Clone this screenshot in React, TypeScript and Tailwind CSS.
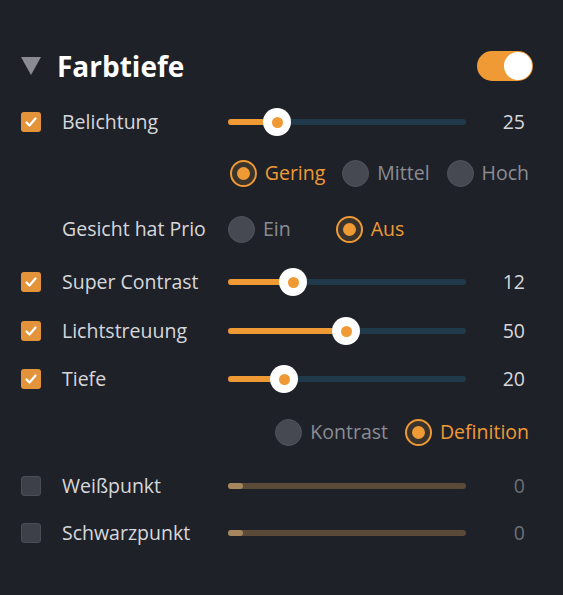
import React from 'react';

function Check({ on }: { on: boolean }) {
  return on ? (
    <div className="w-5 h-5 rounded-[3px] bg-[#e3943a] flex items-center justify-center shrink-0">
      <svg width="14" height="14" viewBox="0 0 14 14" fill="none">
        <path d="M2.5 7.5l3 3 6-7" stroke="#fff" strokeWidth="2.2" strokeLinecap="round" strokeLinejoin="round" />
      </svg>
    </div>
  ) : (
    <div className="w-5 h-5 rounded-[3px] bg-[#3d4049] border border-[#4a4d56] shrink-0" />
  );
}

function Radio({ on, label }: { on: boolean; label: string }) {
  return (
    <div className="flex items-center gap-2">
      {on ? (
        <div className="w-[27px] h-[27px] rounded-full border-2 border-[#ef9a34] bg-[#3a342d] flex items-center justify-center">
          <div className="w-[13px] h-[13px] rounded-full bg-[#ef9a34]" />
        </div>
      ) : (
        <div className="w-[27px] h-[27px] rounded-full bg-[#464952] border border-[#52555e]" />
      )}
      <span className={on ? 'text-[#ef9a34]' : 'text-[#8a8d94]'}>{label}</span>
    </div>
  );
}

function Slider({ pos }: { pos: number }) {
  // pos = knob center in px from track start
  return (
    <div className="relative w-[238px] h-7 flex items-center shrink-0">
      <div className="w-full h-[6px] rounded-full bg-[#203a4b]" />
      <div className="absolute left-0 h-[6px] rounded-full bg-[#ef9a34]" style={{ width: pos }} />
      <div
        className="absolute w-7 h-7 -ml-[14px] rounded-full bg-white flex items-center justify-center"
        style={{ left: pos }}
      >
        <div className="w-[11px] h-[11px] rounded-full bg-[#ef9a34]" />
      </div>
    </div>
  );
}

function DisabledSlider() {
  return (
    <div className="relative w-[238px] h-7 flex items-center shrink-0">
      <div className="w-full h-[6px] rounded-full bg-[#5a4a37]" />
      <div className="absolute left-0 w-[15px] h-[6px] rounded-full bg-[#a5865f]" />
    </div>
  );
}

function SliderRow({ label, pos, value, h }: { label: string; pos: number; value: number; h: string }) {
  return (
    <div className={`flex items-center ${h}`}>
      <Check on />
      <span className="w-[166px] ml-[21px] text-[#d7d8db]">{label}</span>
      <Slider pos={pos} />
      <span className="w-[59px] text-right text-[#d7d8db]">{value}</span>
    </div>
  );
}

function OffRow({ label, h }: { label: string; h: string }) {
  return (
    <div className={`flex items-center ${h}`}>
      <Check on={false} />
      <span className="w-[166px] ml-[21px] text-[#d7d8db]">{label}</span>
      <DisabledSlider />
      <span className="w-[59px] text-right text-[#6c6f76]">0</span>
    </div>
  );
}

export default function App() {
  return (
    <div
      className="w-[563px] h-[595px] bg-[#1f2129] pt-[38px] pl-[21px] pr-[34px] text-[19.5px]"
      style={{ fontFamily: '"Open Sans", "Noto Sans", sans-serif' }}
    >
      <div className="flex items-center h-[56px]">
        <svg width="20" height="18" viewBox="0 0 20 18">
          <path d="M0 0h20L10 18z" fill="#8a8c91" />
        </svg>
        <span className="ml-4 text-[28px] font-bold text-white">Farbtiefe</span>
        <div className="ml-auto mr-[-4px] w-14 h-[30px] rounded-full bg-[#ef9a34] flex items-center justify-end pr-[1px]">
          <div className="w-7 h-7 rounded-full bg-white" />
        </div>
      </div>

      <SliderRow label="Belichtung" pos={49} value={25} h="h-[56px]" />

      <div className="flex items-center justify-end gap-[17px] h-[46px]">
        <Radio on label="Gering" />
        <Radio on={false} label="Mittel" />
        <Radio on={false} label="Hoch" />
      </div>

      <div className="flex items-center h-[66px]">
        <span className="w-[166px] ml-[41px] text-[#d7d8db]">Gesicht hat Prio</span>
        <div className="flex items-center gap-[45px]">
          <Radio on={false} label="Ein" />
          <Radio on label="Aus" />
        </div>
      </div>

      <SliderRow label="Super Contrast" pos={65} value={12} h="h-[40px]" />
      <SliderRow label="Lichtstreuung" pos={118} value={50} h="h-[58px]" />
      <SliderRow label="Tiefe" pos={56} value={20} h="h-[38px]" />

      <div className="flex items-center justify-end gap-[17px] h-[68px]">
        <Radio on={false} label="Kontrast" />
        <Radio on label="Definition" />
      </div>

      <OffRow label="Weißpunkt" h="h-[40px]" />
      <OffRow label="Schwarzpunkt" h="h-[54px]" />
    </div>
  );
}
